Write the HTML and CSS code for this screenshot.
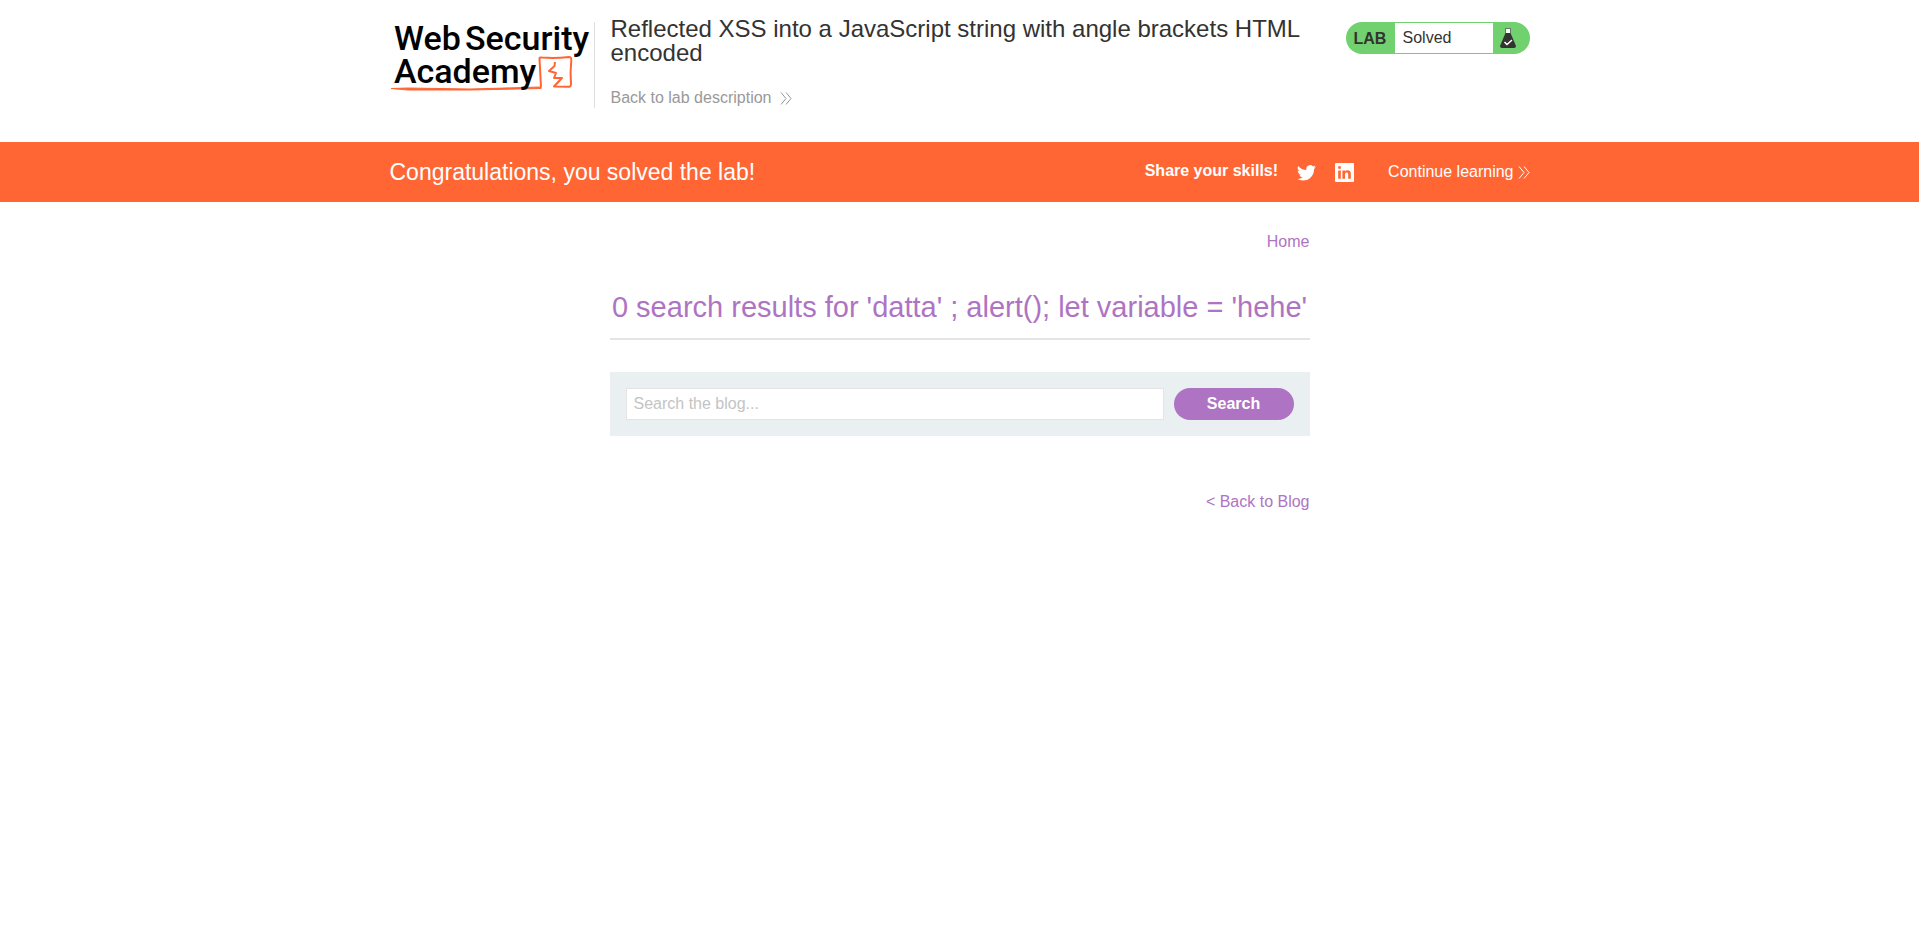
FILE: index.html
```html
<!DOCTYPE html>
<html lang="en">
<head>
<meta charset="utf-8">
<meta name="viewport" content="width=device-width, initial-scale=1">
<title>Reflected XSS into a JavaScript string with angle brackets HTML encoded</title>
<link rel="stylesheet" href="styles.css">
</head>
<body>
<header class="lab-header">
  <div class="container header-row">
    <a class="logo" href="#" aria-label="Web Security Academy">
      <svg width="204" height="76" viewBox="0 0 204 76">
        <path d="M151 65L149.500 37Q149 35 152 35.500Q165 36.500 179 35Q181.500 35 181.300 38Q180 51 181 62Q181 65 178 64.800L164 64.500L172 56L164 56L166 51L159 49L164.500 44L165 40" class="logo-line"/>
        <path d="M1 66.500L18 66L80 67L151 65V66.500L80 68L18 68z" class="logo-rule"/>
        <text x="4" y="28" class="logo-text">Web</text>
        <text x="75" y="28" class="logo-text">Security</text>
        <text x="4" y="61" class="logo-text">Academy</text>
      </svg>
    </a>
    <div class="title-block">
      <h2 class="lab-title">Reflected XSS into a JavaScript string with angle brackets HTML encoded</h2>
      <a class="back-link" href="#">Back to lab description
        <svg class="chevrons" width="12" height="13" viewBox="0 0 12 13"><path d="M1 .5l5 6-5 6M6 .5l5 6-5 6"/></svg>
      </a>
    </div>
    <div class="status">
      <span class="status-label">LAB</span>
      <p class="status-text">Solved</p>
      <span class="status-icon">
        <svg width="16" height="20" viewBox="0 0 16 20"><path d="M5.500 5L0 18Q0 20 2 20H14Q16 20 16 18L10.500 5z" fill="#333332"/><path d="M6 1H10V5H6z" fill="#fff"/><path d="M5 .5H11M5.500 1V5M10.500 1V5" stroke="#66776a" fill="none"/><path d="M4.500 14l2.500 2.500L12 12" stroke="#fff" stroke-width="1.500" fill="none"/></svg>
      </span>
    </div>
  </div>
</header>
<section class="banner">
  <div class="container banner-row">
    <h4 class="banner-title">Congratulations, you solved the lab!</h4>
    <div class="banner-actions">
      <span class="share">Share your skills!</span>
      <a class="social twitter" href="#" aria-label="Twitter"><svg width="19" height="17" viewBox="0 1 24 21"><path fill="#fff" d="M24 4.557a9.830 9.830 0 0 1-2.828.775 4.932 4.932 0 0 0 2.165-2.724 9.864 9.864 0 0 1-3.127 1.195 4.916 4.916 0 0 0-8.384 4.482A13.944 13.944 0 0 1 1.671 3.149a4.930 4.930 0 0 0 1.523 6.574 4.903 4.903 0 0 1-2.229-.616c-.054 2.281 1.581 4.415 3.949 4.890a4.935 4.935 0 0 1-2.224.084 4.928 4.928 0 0 0 4.600 3.419A9.900 9.900 0 0 1 0 19.540a13.940 13.940 0 0 0 7.548 2.212c9.142 0 14.307-7.721 13.995-14.646A10.025 10.025 0 0 0 24 4.557z"/></svg></a>
      <a class="social linkedin" href="#" aria-label="LinkedIn"><svg width="19" height="19" viewBox="0 0 18 18"><rect width="18" height="18" rx="1" fill="#fff"/><path fill="#f63" d="M3 7h2.500v8H3zM3 3h2.500v2.500H3zM7 7h2.500v1C10.500 6.300 15 6 15 10v5h-2.500v-4.500c0-2-3-2-3 0V15H7z"/></svg></a>
      <a class="continue" href="#">Continue learning
        <svg class="chevrons" width="12" height="13" viewBox="0 0 12 13"><path d="M1 .5l5 6-5 6M6 .5l5 6-5 6"/></svg>
      </a>
    </div>
  </div>
</section>
<main class="page">
  <nav class="links"><a href="#">Home</a></nav>
  <h1 class="results">0 search results for 'datta' ; alert(); let variable = 'hehe'</h1>
  <form class="search">
    <input class="search-input" type="text" placeholder="Search the blog..." aria-label="Search the blog">
    <button class="search-button" type="submit">Search</button>
  </form>
  <div class="links"><a href="#">&lt; Back to Blog</a></div>
</main>
</body>
</html>
```
FILE: styles.css
```css
* { box-sizing: border-box; }
body {
  margin: 0;
  color: #333332;
  background: #fff;
  font: 16px/24px "Liberation Sans", Arial, sans-serif;
}
a { color: #ae74c3; text-decoration: none; }
h1, h2, h4, p { margin: 0; font-weight: 400; }
svg { display: block; }

.container { max-width: 1140px; margin: 0 auto; }
.header-row { display: flex; align-items: flex-start; padding: 17px 0 32px; }
.logo {
  flex: none;
  margin-top: 5px;
  padding-bottom: 10px;
  border-right: 1px solid #dedede;
}
.logo svg { overflow: visible; }
.logo-text { font: 500 34px/32px Roboto, sans-serif; fill: #000; }
.logo-line { fill: none; stroke: #f63; stroke-width: 2; stroke-linejoin: round; }
.logo-rule { fill: #f63; stroke: #f63; stroke-width: 1; stroke-linejoin: round; }
.title-block { flex: 1; padding-left: 16px; }
.lab-title { max-width: 700px; font-size: 24px; line-height: 24px; }
.back-link {
  display: flex;
  align-items: center;
  gap: 9px;
  margin-top: 21px;
  color: #999;
}
.chevrons path { fill: none; stroke: currentColor; }

.status {
  display: flex;
  flex: none;
  width: 184px;
  height: 32px;
  margin-top: 5px;
  overflow: hidden;
  background: #70d16e;
  border-radius: 16px;
}
.status-label { width: 49px; padding-left: 8px; font-weight: 700; line-height: 34px; }
.status-text { flex: 1; margin: 1px 0; padding-left: 8px; line-height: 30px; background: #fff; }
.status-icon { width: 37px; padding: 6px 7px; }

.banner { color: #fff; background: #f63; }
.banner-row { display: flex; align-items: center; justify-content: space-between; min-height: 60px; }
.banner-title { font-size: 23px; }
.banner-actions { display: flex; align-items: center; }
.share { padding-bottom: 3px; font-weight: 700; }
.social { margin-left: 19px; }
.continue { display: flex; align-items: center; gap: 4px; margin-left: 34px; color: #fff; }

.page { max-width: 700px; margin: 0 auto; padding-top: 28px; }
.links { text-align: right; }
.results {
  padding: 33px 0 11px;
  color: #ae74c3;
  font-size: 29px;
  line-height: 40px;
  text-align: center;
  border-bottom: 2px solid #e4e4e4;
}
.search { display: flex; gap: 10px; margin: 32px 0 54px; padding: 16px; background: #eaeff2; }
.search-input {
  flex: 1;
  min-width: 0;
  height: 32px;
  padding: 0 7px;
  font: inherit;
  background: #fff;
  border: 1px solid #e4e4e4;
}
.search-input::placeholder { color: #c4c4c4; }
.search-button {
  width: 120px;
  height: 32px;
  color: #fff;
  font: inherit;
  font-weight: 700;
  background: #ae74c3;
  border: 0;
  border-radius: 16px;
}
```
